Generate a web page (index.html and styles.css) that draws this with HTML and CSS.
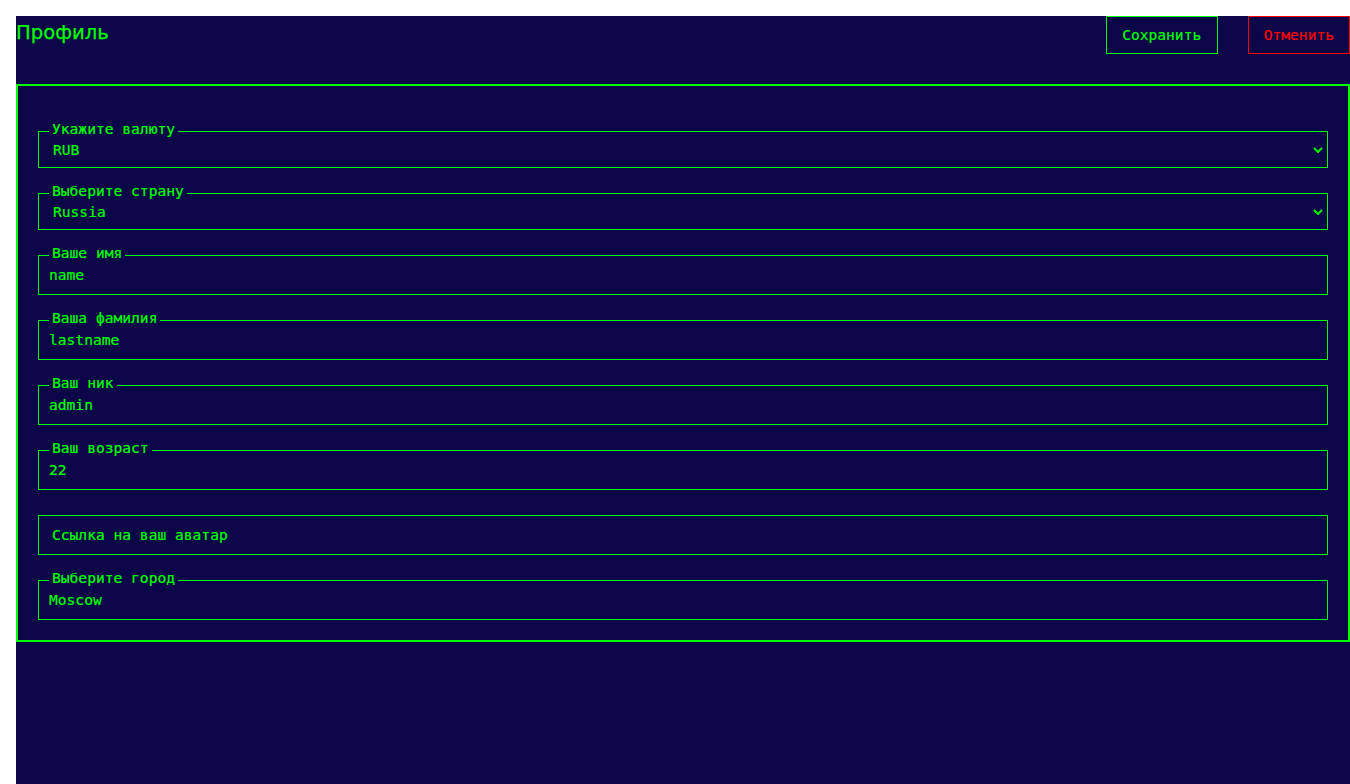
FILE: index.html
```html
<!DOCTYPE html>
<html lang="ru">
<head>
<meta charset="utf-8">
<title>Профиль</title>
<link rel="stylesheet" href="styles.css">
</head>
<body>
<div class="page">
  <header class="header">
    <h1 class="title">Профиль</h1>
    <div class="actions">
      <button class="btn btn-save" type="button">Сохранить</button>
      <button class="btn btn-cancel" type="button">Отменить</button>
    </div>
  </header>
  <form class="card">
    <fieldset class="field field-select">
      <legend class="legend">Укажите валюту</legend>
      <div class="select-wrap">
        <select class="select"><option>RUB</option><option>USD</option><option>EUR</option></select>
        <svg class="chevron" width="10" height="6" viewBox="0 0 10 6"><polyline points="1,1 5,5 9,1" fill="none" stroke="#00ff00" stroke-width="2"/></svg>
      </div>
    </fieldset>
    <fieldset class="field field-select">
      <legend class="legend">Выберите страну</legend>
      <div class="select-wrap">
        <select class="select"><option>Russia</option><option>Belarus</option><option>Kazakhstan</option></select>
        <svg class="chevron" width="10" height="6" viewBox="0 0 10 6"><polyline points="1,1 5,5 9,1" fill="none" stroke="#00ff00" stroke-width="2"/></svg>
      </div>
    </fieldset>
    <fieldset class="field">
      <legend class="legend">Ваше имя</legend>
      <input class="input" type="text" value="name">
    </fieldset>
    <fieldset class="field">
      <legend class="legend">Ваша фамилия</legend>
      <input class="input" type="text" value="lastname">
    </fieldset>
    <fieldset class="field">
      <legend class="legend">Ваш ник</legend>
      <input class="input" type="text" value="admin">
    </fieldset>
    <fieldset class="field">
      <legend class="legend">Ваш возраст</legend>
      <input class="input" type="text" value="22">
    </fieldset>
    <fieldset class="field field-plain">
      <input class="input input-plain" type="text" placeholder="Ссылка на ваш аватар">
    </fieldset>
    <fieldset class="field">
      <legend class="legend">Выберите город</legend>
      <input class="input" type="text" value="Moscow">
    </fieldset>
  </form>
</div>
</body>
</html>
```
FILE: styles.css
```css
* {
  box-sizing: border-box;
}

html, body {
  margin: 0;
  background: #ffffff;
}

body {
  padding: 16px 0 0 16px;
  overflow: hidden;
}

.page {
  background: #0a0648;
  min-height: calc(100vh - 16px);
  color: #00ff00;
  font-family: "DejaVu Sans Mono", "Liberation Mono", monospace;
  font-size: 14.6px;
}

.header {
  display: flex;
  justify-content: space-between;
  align-items: flex-start;
  height: 38px;
}

.title {
  margin: 0;
  padding-top: 5px;
  font-family: "DejaVu Sans", "Noto Sans", sans-serif;
  font-size: 19.6px;
  font-weight: normal;
  line-height: 23px;
  color: #00ff00;
  -webkit-text-stroke: 0.25px #00ff00;
}

.actions {
  display: flex;
  gap: 30px;
}

.btn {
  background: transparent;
  font-family: "DejaVu Sans Mono", "Liberation Mono", monospace;
  font-size: 14.6px;
  line-height: 17px;
  padding: 8.5px 15.5px 10.5px;
  height: 38px;
  margin: 0;
  cursor: pointer;
}

.btn-save {
  color: #00ff00;
  border: 1px solid #00ff00;
  -webkit-text-stroke: 0.2px #00ff00;
}

.btn-cancel {
  color: #ff0000;
  border: 1px solid #ff0000;
  padding: 8.5px 15px 10.5px;
  -webkit-text-stroke: 0.2px #ff0000;
}

.card {
  margin: 30px 0 0;
  border: 2px solid #00ff00;
  padding: 20px;
}

.field {
  margin: 13.5px 0 0;
  padding: 0 0 0 10px;
  border: 1px solid #00ff00;
  min-width: 0;
}

.legend {
  padding: 0 3px 6px;
  line-height: 17px;
  font-size: 14.6px;
  color: #00ff00;
  -webkit-text-stroke: 0.2px #00ff00;
}

.select-wrap {
  position: relative;
}

.select {
  appearance: none;
  -webkit-appearance: none;
  display: block;
  width: 100%;
  height: 24.5px;
  margin: 0;
  padding: 0 4px 11.5px;
  border: none;
  background: transparent;
  color: #00ff00;
  font-family: "DejaVu Sans Mono", "Liberation Mono", monospace;
  font-size: 14.6px;
  line-height: 13px;
  outline: none;
  -webkit-text-stroke: 0.2px #00ff00;
}

.select option {
  background: #0a0648;
  color: #00ff00;
}

.chevron {
  position: absolute;
  right: 4px;
  top: 4px;
  pointer-events: none;
}

.input {
  display: block;
  width: 100%;
  margin: 0;
  padding: 0 0 12.5px;
  border: none;
  background: transparent;
  color: #00ff00;
  font-family: "DejaVu Sans Mono", "Liberation Mono", monospace;
  font-size: 14.6px;
  line-height: 15px;
  height: 27.5px;
  outline: none;
  -webkit-text-stroke: 0.2px #00ff00;
}

.field-plain {
  margin-top: 25px;
}

.input-plain {
  padding: 0 3px 2px;
  line-height: 17px;
  height: 38px;
}

.input-plain::placeholder {
  color: #00ff00;
  opacity: 1;
}
```
